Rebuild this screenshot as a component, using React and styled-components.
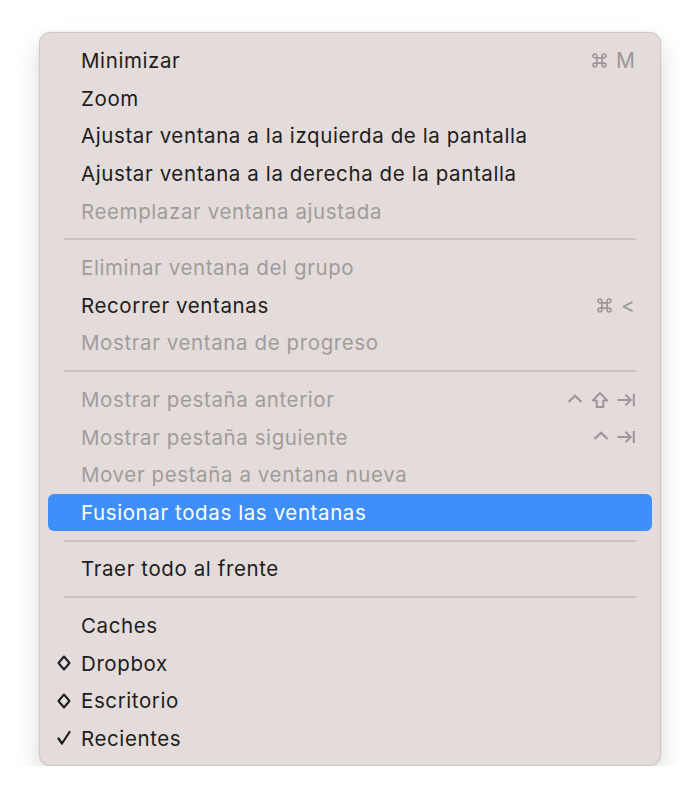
import React from "react";
import styled, { createGlobalStyle } from "styled-components";

const Global = createGlobalStyle`
  html, body { margin: 0; padding: 0; background: #ffffff; }
  body { font-family: "Inter", "Noto Sans", "DejaVu Sans", sans-serif; }
`;

const Page = styled.div`
  padding: 32px 0 0 39px;
`;

const Menu = styled.div`
  width: 622px;
  box-sizing: border-box;
  background: #e3dcda;
  border: 1px solid #cfc8c6;
  border-radius: 11px;
  box-shadow: 0 10px 24px rgba(0, 0, 0, 0.15), 0 0 2px rgba(0, 0, 0, 0.1);
  padding: 9px 8px 8px 8px;
  display: flex;
  flex-direction: column;
`;

const Row = styled.div`
  height: 37.6px;
  display: flex;
  align-items: center;
  padding: 0 17px 0 0;
  border-radius: 6px;
  background: ${(p) => (p.$active ? "#3e8ffb" : "transparent")};
  color: ${(p) => (p.$active ? "#ffffff" : p.$disabled ? "#a19c9b" : "#1e1c1c")};
  font-size: 20.5px;
  letter-spacing: 0.6px;
`;

const Mark = styled.span`
  width: 33px;
  flex: none;
  display: flex;
  justify-content: flex-start;
  padding-left: 9px;
  box-sizing: border-box;
  color: #1e1c1c;
`;

const Label = styled.span`
  flex: 1;
`;

const Shortcut = styled.span`
  color: #9c9796;
  display: flex;
  gap: 8px;
  align-items: center;
`;

const Sep = styled.div`
  height: 19px;
  display: flex;
  align-items: center;
  padding: 0 16px;
  &::after {
    content: "";
    flex: 1;
    height: 2px;
    background: #cac3c1;
  }
`;

const Letter = styled.span`
  font-family: "Inter", sans-serif;
  font-size: 21px;
  letter-spacing: 0;
`;

const Cmd = () => (
  <svg width="17" height="17" viewBox="0 0 16 16" fill="none" stroke="currentColor" strokeWidth="1.5">
    <path d="M5.5 5.5h5v5h-5z M5.5 5.5V3.7a1.8 1.8 0 1 0-1.8 1.8H5.5 M10.5 5.5V3.7a1.8 1.8 0 1 1 1.8 1.8H10.5 M5.5 10.5v1.8a1.8 1.8 0 1 1-1.8-1.8H5.5 M10.5 10.5v1.8a1.8 1.8 0 1 0 1.8-1.8H10.5" />
  </svg>
);

const Ctrl = () => (
  <svg width="16" height="16" viewBox="0 0 16 16" fill="none" stroke="currentColor" strokeWidth="2.2">
    <path d="M1.5 10 8 3.8l6.5 6.2" />
  </svg>
);

const Shift = () => (
  <svg width="18" height="18" viewBox="0 0 18 18" fill="none" stroke="currentColor" strokeWidth="2" strokeLinejoin="round">
    <path d="M9 2 1.8 9.4h3.9V16h6.6V9.4h3.9z" />
  </svg>
);

const Tab = () => (
  <svg width="18" height="16" viewBox="0 0 18 16" fill="none" stroke="currentColor" strokeWidth="2">
    <path d="M0.5 8h13 M8.5 2.8 13.7 8l-5.2 5.2 M16.8 2v12" />
  </svg>
);

const Diamond = () => (
  <svg width="14" height="16" viewBox="0 0 14 16" fill="none" stroke="currentColor" strokeWidth="2" strokeLinejoin="round">
    <path d="M7 1.5 12.5 8 7 14.5 1.5 8z" />
  </svg>
);

const Check = () => (
  <svg width="14" height="16" viewBox="0 0 14 16" fill="none" stroke="currentColor" strokeWidth="2.2" strokeLinecap="round" strokeLinejoin="round">
    <path d="M1.5 8.5 5 13.5 12.5 2" />
  </svg>
);

const items = [
  { label: "Minimizar", sc: [<Cmd key="c" />, <Letter key="m">M</Letter>] },
  { label: "Zoom" },
  { label: "Ajustar ventana a la izquierda de la pantalla" },
  { label: "Ajustar ventana a la derecha de la pantalla" },
  { label: "Reemplazar ventana ajustada", disabled: true },
  "sep",
  { label: "Eliminar ventana del grupo", disabled: true },
  { label: "Recorrer ventanas", sc: [<Cmd key="c" />, <Letter key="l">&lt;</Letter>] },
  { label: "Mostrar ventana de progreso", disabled: true },
  "sep",
  { label: "Mostrar pestaña anterior", disabled: true, sc: [<Ctrl key="a" />, <Shift key="s" />, <Tab key="t" />] },
  { label: "Mostrar pestaña siguiente", disabled: true, sc: [<Ctrl key="a" />, <Tab key="t" />] },
  { label: "Mover pestaña a ventana nueva", disabled: true },
  { label: "Fusionar todas las ventanas", active: true },
  "sep",
  { label: "Traer todo al frente" },
  "sep",
  { label: "Caches" },
  { label: "Dropbox", mark: <Diamond /> },
  { label: "Escritorio", mark: <Diamond /> },
  { label: "Recientes", mark: <Check /> },
];

export default function App() {
  return (
    <Page>
      <Global />
      <Menu>
        {items.map((it, i) =>
          it === "sep" ? (
            <Sep key={i} />
          ) : (
            <Row key={i} $disabled={it.disabled} $active={it.active}>
              <Mark>{it.mark || null}</Mark>
              <Label>{it.label}</Label>
              {it.sc && <Shortcut>{it.sc}</Shortcut>}
            </Row>
          )
        )}
      </Menu>
    </Page>
  );
}
